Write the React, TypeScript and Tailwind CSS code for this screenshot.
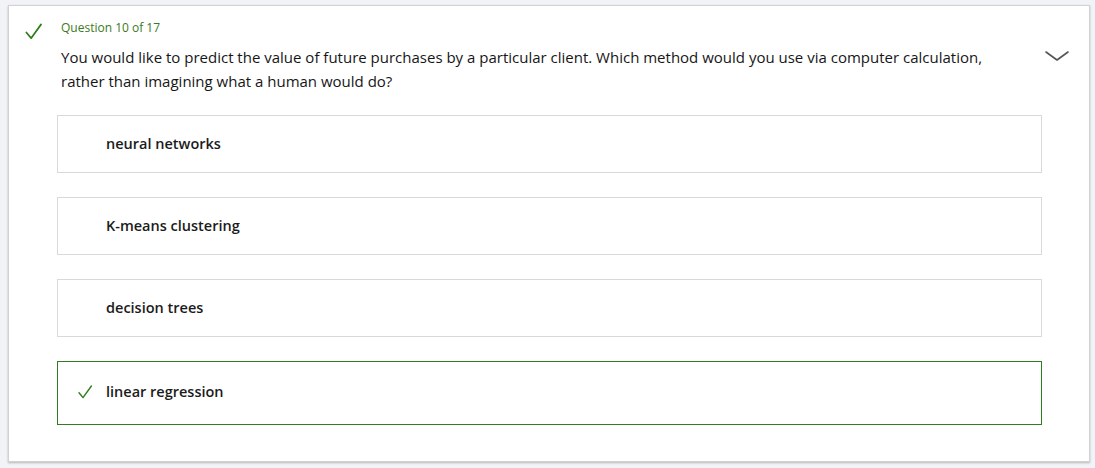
const options = [
  { label: "neural networks", correct: false },
  { label: "K-means clustering", correct: false },
  { label: "decision trees", correct: false },
  { label: "linear regression", correct: true },
];

function Check({ className }: { className?: string }) {
  return (
    <svg viewBox="0 0 20 20" className={className} fill="none">
      <path d="M2.5 11 L7.5 17 L18 2.5" stroke="currentColor" strokeWidth="1.8" strokeLinecap="round" strokeLinejoin="round" />
    </svg>
  );
}

export default function App() {
  return (
    <div className="min-h-[468px] bg-[#f1f3f6] pt-[5px] pl-2 pr-[5px] pb-[6px] font-['Open_Sans','Noto_Sans',sans-serif]">
      <div className="border border-[#d2d2d2] bg-white shadow-[0_1px_2px_rgba(0,0,0,0.25)]">
        <div className="flex pt-[14px] pr-[20px]">
          <div className="w-[52px] shrink-0 pl-[15px] pt-[2px]">
            <Check className="h-[19px] w-[19px] text-[#2f7d1f]" />
          </div>
          <div className="flex-1">
            <div className="text-[12px] leading-[16px] text-[#3b7a22]">Question 10 of 17</div>
            <div className="mt-[9px] flex">
              <p className="w-[940px] text-[15px] leading-[24px] text-[#161616]">
                You would like to predict the value of future purchases by a particular client. Which method would you use via computer calculation, rather than imagining what a human would do?
              </p>
              <div className="flex flex-1 justify-end pt-[6px]">
                <svg viewBox="0 0 24 10" className="h-[10px] w-[24px] text-[#555]" fill="none">
                  <path d="M1 1 L12 9 L23 1" stroke="currentColor" strokeWidth="1.6" strokeLinecap="round" strokeLinejoin="round" />
                </svg>
              </div>
            </div>
          </div>
        </div>
        <div className="flex flex-col gap-[24px] pl-[48px] pr-[47px] pt-[22px] pb-[36px]">
          {options.map((o) => (
            <div
              key={o.label}
              className={
                o.correct
                  ? "flex h-[64px] items-center border border-[#2f7d1f] pl-[19px] pb-[3px]"
                  : "flex h-[58px] items-center border border-[#d9d9d9] pl-[48px]"
              }
            >
              {o.correct && <Check className="mr-[13px] h-[16px] w-[16px] text-[#2f7d1f]" />}
              <span className="text-[14.5px] font-semibold text-[#1b1b1b]">{o.label}</span>
            </div>
          ))}
        </div>
      </div>
    </div>
  );
}
